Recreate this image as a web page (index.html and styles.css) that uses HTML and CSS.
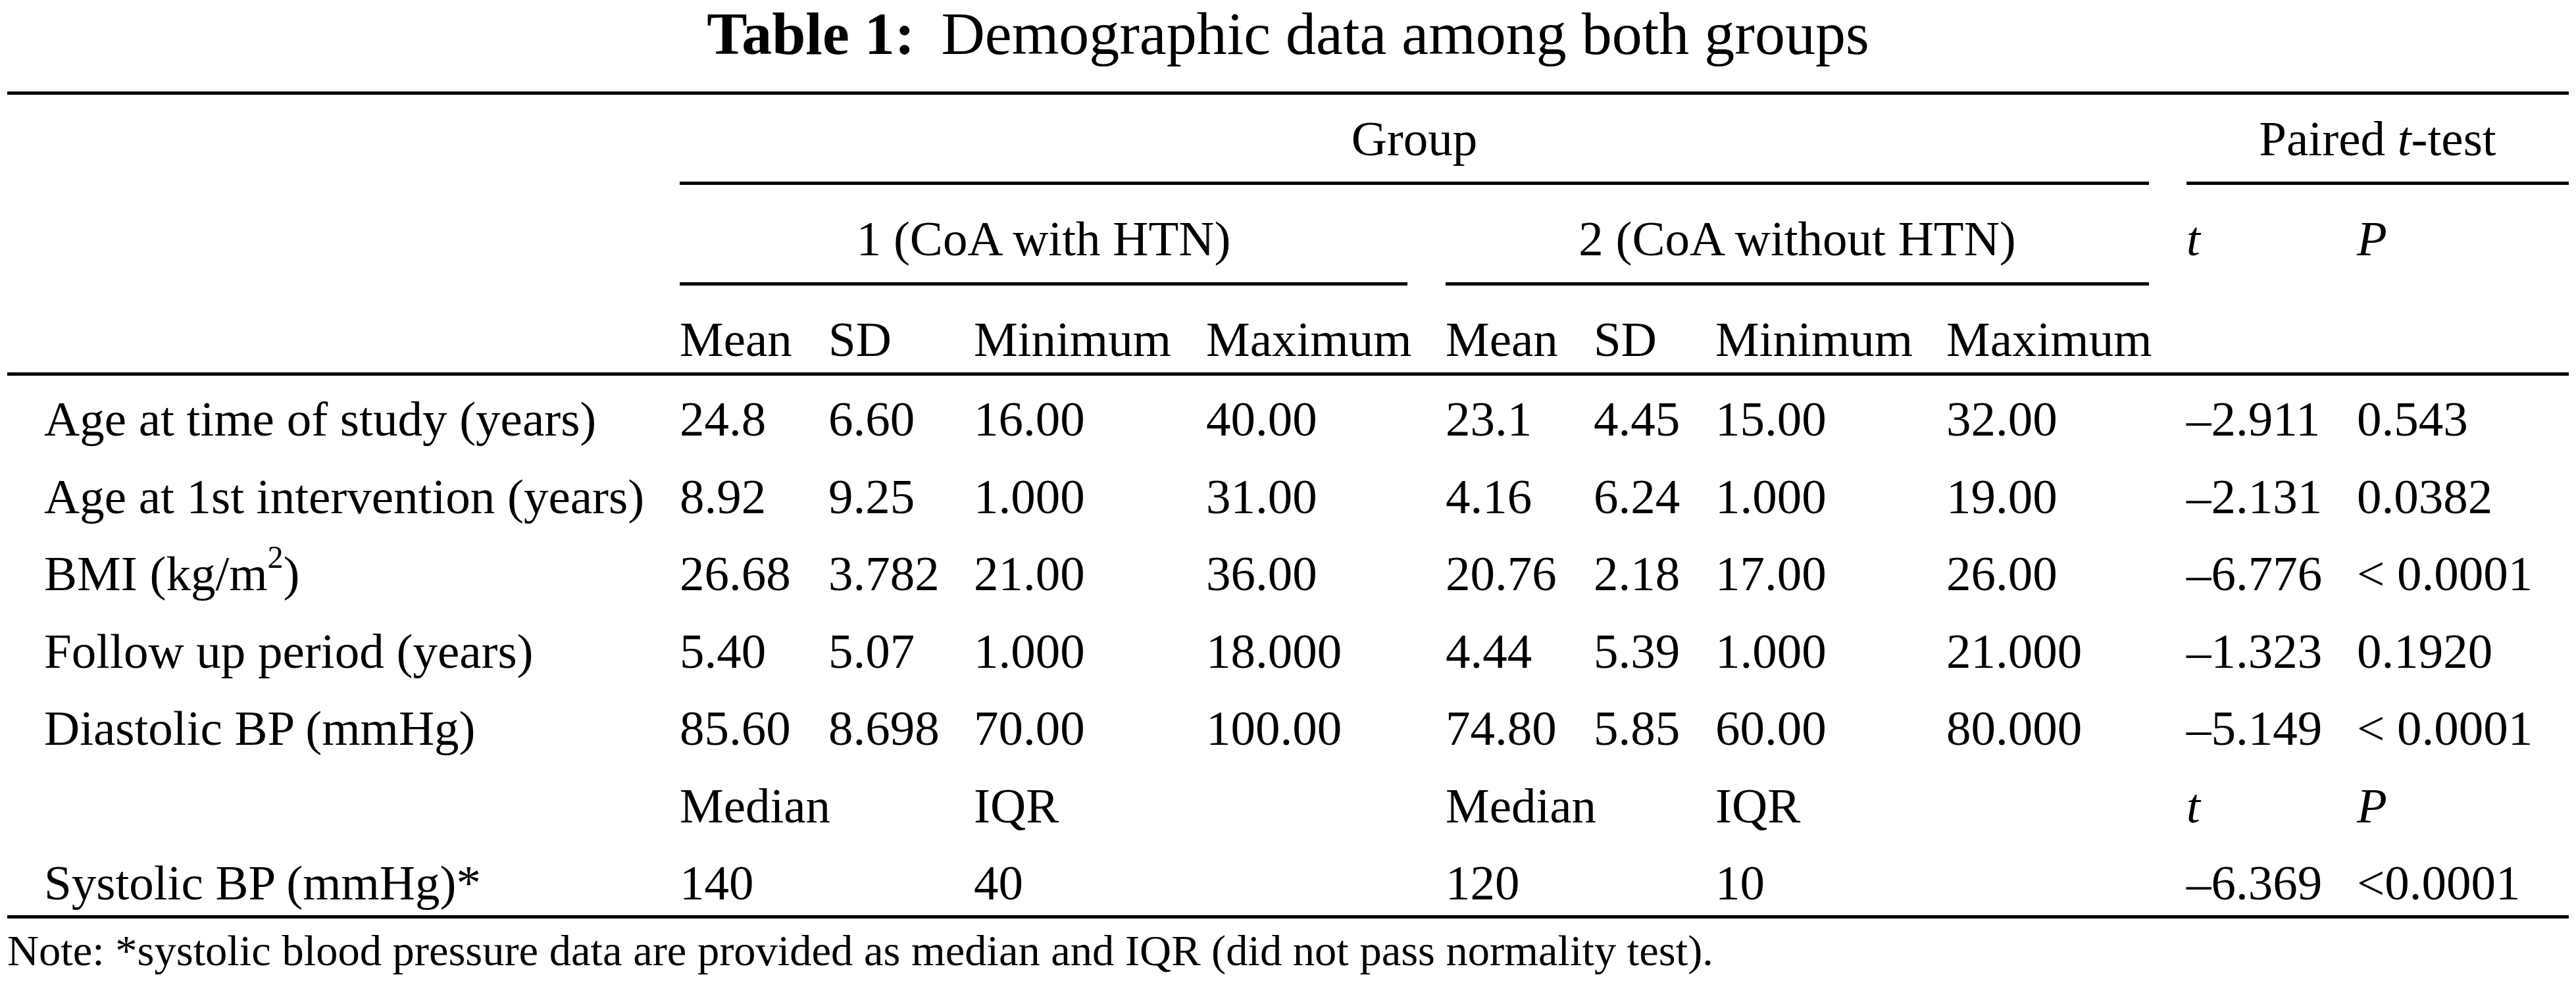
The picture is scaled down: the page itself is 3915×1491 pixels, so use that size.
FILE: index.html
```html
<!DOCTYPE html>
<html lang="en">
<head>
<meta charset="utf-8">
<title>Table 1: Demographic data among both groups</title>
<link rel="stylesheet" href="styles.css">
</head>
<body>
<div class="page">
  <div class="caption"><b class="cap-label">Table 1:</b><span class="cap-text">Demographic data among both groups</span></div>
  <div class="table-wrap">
    <table class="data">
      <colgroup>
        <col class="c-label">
        <col class="c-mean1">
        <col class="c-sd1">
        <col class="c-min1">
        <col class="c-max1">
        <col class="c-mean2">
        <col class="c-sd2">
        <col class="c-min2">
        <col class="c-max2">
        <col class="c-t">
        <col class="c-p">
      </colgroup>
      <thead>
        <tr class="hr-a">
          <th class="label-head" rowspan="3"></th>
          <th colspan="8"><div class="span-head gap">Group</div></th>
          <th colspan="2"><div class="span-head">Paired <i>t</i>-test</div></th>
        </tr>
        <tr class="hr-b">
          <th colspan="4"><div class="span-head gap1">1 (CoA with HTN)</div></th>
          <th colspan="4"><div class="span-head gap">2 (CoA without HTN)</div></th>
          <th><div class="plain-head"><i>t</i></div></th>
          <th><div class="plain-head"><i>P</i></div></th>
        </tr>
        <tr class="hr-c">
          <th>Mean</th>
          <th>SD</th>
          <th>Minimum</th>
          <th>Maximum</th>
          <th>Mean</th>
          <th>SD</th>
          <th>Minimum</th>
          <th>Maximum</th>
          <th></th>
          <th></th>
        </tr>
      </thead>
      <tbody>
        <tr class="first">
          <td class="label">Age at time of study (years)</td>
          <td>24.8</td><td>6.60</td><td>16.00</td><td>40.00</td>
          <td>23.1</td><td>4.45</td><td>15.00</td><td>32.00</td>
          <td>–2.911</td><td>0.543</td>
        </tr>
        <tr>
          <td class="label">Age at 1st intervention (years)</td>
          <td>8.92</td><td>9.25</td><td>1.000</td><td>31.00</td>
          <td>4.16</td><td>6.24</td><td>1.000</td><td>19.00</td>
          <td>–2.131</td><td>0.0382</td>
        </tr>
        <tr>
          <td class="label">BMI (kg/m<sup>2</sup>)</td>
          <td>26.68</td><td>3.782</td><td>21.00</td><td>36.00</td>
          <td>20.76</td><td>2.18</td><td>17.00</td><td>26.00</td>
          <td>–6.776</td><td>&lt; 0.0001</td>
        </tr>
        <tr>
          <td class="label">Follow up period (years)</td>
          <td>5.40</td><td>5.07</td><td>1.000</td><td>18.000</td>
          <td>4.44</td><td>5.39</td><td>1.000</td><td>21.000</td>
          <td>–1.323</td><td>0.1920</td>
        </tr>
        <tr>
          <td class="label">Diastolic BP (mmHg)</td>
          <td>85.60</td><td>8.698</td><td>70.00</td><td>100.00</td>
          <td>74.80</td><td>5.85</td><td>60.00</td><td>80.000</td>
          <td>–5.149</td><td>&lt; 0.0001</td>
        </tr>
        <tr class="sub-head">
          <td class="label"></td>
          <td colspan="2">Median</td><td colspan="2">IQR</td>
          <td colspan="2">Median</td><td colspan="2">IQR</td>
          <td><i>t</i></td><td><i>P</i></td>
        </tr>
        <tr class="last">
          <td class="label">Systolic BP (mmHg)*</td>
          <td colspan="2">140</td><td colspan="2">40</td>
          <td colspan="2">120</td><td colspan="2">10</td>
          <td>–6.369</td><td>&lt;0.0001</td>
        </tr>
      </tbody>
    </table>
  </div>
  <p class="note">Note: *systolic blood pressure data are provided as median and IQR (did not pass normality test).</p>
</div>
</body>
</html>
```

FILE: styles.css
```css
html, body {
  margin: 0;
  padding: 0;
  background: #ffffff;
}

body {
  font-family: "Liberation Serif", "Times New Roman", serif;
  color: #000000;
}

.page {
  width: 3893px;
  padding-left: 11px;
}

.caption {
  font-size: 92px;
  line-height: 102px;
  text-align: center;
  white-space: nowrap;
}

.cap-label {
  font-weight: bold;
}

.cap-text {
  padding-left: 40px;
}

.table-wrap {
  margin-top: 37px;
  border-top: 5px solid #000;
  border-bottom: 5px solid #000;
}

.data {
  width: 3893px;
  table-layout: fixed;
  border-collapse: separate;
  border-spacing: 0;
  font-size: 75px;
  line-height: 85px;
}

.c-label { width: 1022px; }
.c-mean1 { width: 226px; }
.c-sd1 { width: 221px; }
.c-min1 { width: 353px; }
.c-max1 { width: 364px; }
.c-mean2 { width: 225px; }
.c-sd2 { width: 185px; }
.c-min2 { width: 351px; }
.c-max2 { width: 365px; }
.c-t { width: 259px; }
.c-p { width: 322px; }

th, td {
  padding: 0;
  font-weight: normal;
  text-align: left;
  vertical-align: top;
  white-space: nowrap;
}

.span-head {
  text-align: center;
  border-bottom: 5px solid #000;
}

.span-head.gap { margin-right: 57px; }
.span-head.gap1 { margin-right: 58px; }

.hr-a .span-head {
  padding-top: 24px;
  padding-bottom: 23px;
}

.hr-b .span-head,
.hr-b .plain-head {
  padding-top: 39px;
  padding-bottom: 24px;
}

.plain-head {
  border-bottom: 5px solid transparent;
}

.hr-c th {
  padding-top: 39px;
  padding-bottom: 8px;
  border-bottom: 5px solid #000;
}

.label-head {
  border-bottom: 5px solid #000;
}

td {
  padding-top: 16px;
  padding-bottom: 16.5px;
}

td.label {
  padding-left: 56px;
}

tr.first td {
  padding-top: 23px;
}

tr.last td {
  padding-bottom: 7px;
}

sup {
  font-size: 0.64em;
  line-height: 0;
  vertical-align: 0.7em;
}

.note {
  margin: 12px 0 0 0;
  font-size: 66.5px;
  line-height: 74px;
  white-space: nowrap;
}
```
